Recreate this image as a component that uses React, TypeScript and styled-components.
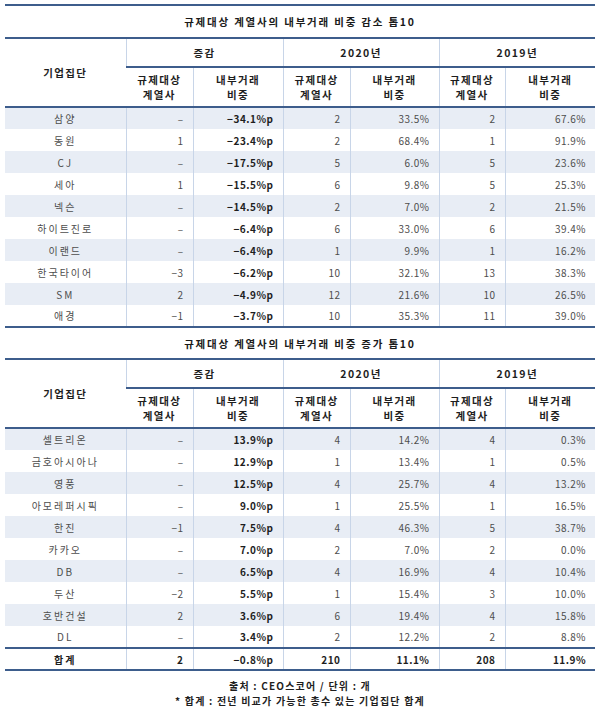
import React from "react";
import styled, { createGlobalStyle } from "styled-components";

const Global = createGlobalStyle`
  html, body { margin: 0; padding: 0; background: #ffffff; }
  body { font-family: "Noto Sans CJK KR", "Noto Sans", sans-serif; }
`;

const DARK = "#3d5d8c";
const LIGHT = "#c8d5e8";
const STRIPE = "#e8edf5";

const Page = styled.div`
  width: 590px;
  padding: 4px 5px 0 5px;
  display: flex;
  flex-direction: column;
`;

const Title = styled.div<{ $top?: boolean }>`
  height: ${(p) => (p.$top ? 31 : 30)}px;
  border-top: ${(p) => (p.$top ? `2px solid ${DARK}` : "none")};
  display: flex;
  align-items: center;
  justify-content: center;
  font-size: 10.5px;
  font-weight: 700;
  letter-spacing: 1.8px;
  color: #1a1a1a;
`;

const Table = styled.table`
  width: 590px;
  border-collapse: collapse;
  table-layout: fixed;
  border-top: 2px solid ${DARK};
  border-bottom: 2px solid ${DARK};
`;

const Th = styled.th<{ $sub?: boolean; $group?: boolean }>`
  font-size: 10.5px;
  font-weight: 700;
  letter-spacing: 1.4px;
  color: #1e1e1e;
  text-align: center;
  line-height: 15px;
  padding: 0;
  height: ${(p) => (p.$sub ? 38 : 27)}px;
  border-left: 1px solid ${LIGHT};
  border-bottom: ${(p) => (p.$group ? `2px solid ${DARK}` : "none")};
  &:first-child { border-left: none; }
`;

const HeadRow = styled.tr<{ $last?: boolean }>`
  border-bottom: ${(p) => (p.$last ? `2px solid ${DARK}` : "none")};
`;

const Row = styled.tr<{ $stripe?: boolean; $total?: boolean }>`
  height: 22px;
  background: ${(p) => (p.$stripe ? STRIPE : "#ffffff")};
  border-top: ${(p) => (p.$total ? `2px solid ${DARK}` : "none")};
`;

const Td = styled.td<{ $name?: boolean; $bold?: boolean }>`
  font-size: 10px;
  letter-spacing: ${(p) => (p.$name ? "2px" : "0.5px")};
  font-weight: ${(p) => (p.$bold ? 700 : 400)};
  color: ${(p) => (p.$bold ? "#1e1e1e" : "#4d4d4d")};
  text-align: ${(p) => (p.$name ? "center" : "right")};
  padding: 0 ${(p) => (p.$name ? 0 : 9)}px 0 0;
  border-left: 1px solid ${LIGHT};
  white-space: nowrap;
  &:first-child { border-left: none; }
`;

const Notes = styled.div`
  display: flex;
  flex-direction: column;
  align-items: center;
  margin-top: 8px;
`;

const Note = styled.div`
  font-size: 10px;
  font-weight: 700;
  letter-spacing: 1.2px;
  color: #1e1e1e;
  line-height: 14.5px;
`;

type R = [string, string, string, string, string, string, string];

const dec: R[] = [
  ["삼양", "–", "−34.1%p", "2", "33.5%", "2", "67.6%"],
  ["동원", "1", "−23.4%p", "2", "68.4%", "1", "91.9%"],
  ["CJ", "–", "−17.5%p", "5", "6.0%", "5", "23.6%"],
  ["세아", "1", "−15.5%p", "6", "9.8%", "5", "25.3%"],
  ["넥슨", "–", "−14.5%p", "2", "7.0%", "2", "21.5%"],
  ["하이트진로", "–", "−6.4%p", "6", "33.0%", "6", "39.4%"],
  ["이랜드", "–", "−6.4%p", "1", "9.9%", "1", "16.2%"],
  ["한국타이어", "−3", "−6.2%p", "10", "32.1%", "13", "38.3%"],
  ["SM", "2", "−4.9%p", "12", "21.6%", "10", "26.5%"],
  ["애경", "−1", "−3.7%p", "10", "35.3%", "11", "39.0%"],
];

const inc: R[] = [
  ["셀트리온", "–", "13.9%p", "4", "14.2%", "4", "0.3%"],
  ["금호아시아나", "–", "12.9%p", "1", "13.4%", "1", "0.5%"],
  ["영풍", "–", "12.5%p", "4", "25.7%", "4", "13.2%"],
  ["아모레퍼시픽", "–", "9.0%p", "1", "25.5%", "1", "16.5%"],
  ["한진", "−1", "7.5%p", "4", "46.3%", "5", "38.7%"],
  ["카카오", "–", "7.0%p", "2", "7.0%", "2", "0.0%"],
  ["DB", "–", "6.5%p", "4", "16.9%", "4", "10.4%"],
  ["두산", "−2", "5.5%p", "1", "15.4%", "3", "10.0%"],
  ["호반건설", "2", "3.6%p", "6", "19.4%", "4", "15.8%"],
  ["DL", "–", "3.4%p", "2", "12.2%", "2", "8.8%"],
];

const total: R = ["합계", "2", "−0.8%p", "210", "11.1%", "208", "11.9%"];

const widths = [121, 67, 90, 67, 89, 66, 90];

const Head: React.FC = () => (
  <>
    <colgroup>
      {widths.map((w, i) => (
        <col key={i} style={{ width: w }} />
      ))}
    </colgroup>
    <thead>
      <HeadRow>
        <Th rowSpan={2}>기업집단</Th>
        <Th colSpan={2} $group>증감</Th>
        <Th colSpan={2} $group>2020년</Th>
        <Th colSpan={2} $group>2019년</Th>
      </HeadRow>
      <HeadRow $last>
        {[0, 1, 2].map((i) => (
          <React.Fragment key={i}>
            <Th $sub>
              규제대상
              <br />
              계열사
            </Th>
            <Th $sub>
              내부거래
              <br />
              비중
            </Th>
          </React.Fragment>
        ))}
      </HeadRow>
    </thead>
  </>
);

const DataRow: React.FC<{ r: R; stripe?: boolean; isTotal?: boolean }> = ({ r, stripe, isTotal }) => (
  <Row $stripe={stripe} $total={isTotal}>
    <Td $name $bold={isTotal}>{r[0]}</Td>
    <Td $bold={isTotal}>{r[1]}</Td>
    <Td $bold>{r[2]}</Td>
    <Td $bold={isTotal}>{r[3]}</Td>
    <Td $bold={isTotal}>{r[4]}</Td>
    <Td $bold={isTotal}>{r[5]}</Td>
    <Td $bold={isTotal}>{r[6]}</Td>
  </Row>
);

export default function App() {
  return (
    <Page>
      <Global />
      <Title $top>규제대상 계열사의 내부거래 비중 감소 톱10</Title>
      <Table>
        <Head />
        <tbody>
          {dec.map((r, i) => (
            <DataRow key={r[0]} r={r} stripe={i % 2 === 0} />
          ))}
        </tbody>
      </Table>
      <Title>규제대상 계열사의 내부거래 비중 증가 톱10</Title>
      <Table>
        <Head />
        <tbody>
          {inc.map((r, i) => (
            <DataRow key={r[0]} r={r} stripe={i % 2 === 0} />
          ))}
          <DataRow r={total} isTotal />
        </tbody>
      </Table>
      <Notes>
        <Note>출처 : CEO스코어 / 단위 : 개</Note>
        <Note>* 합계 : 전년 비교가 가능한 총수 있는 기업집단 합계</Note>
      </Notes>
    </Page>
  );
}
